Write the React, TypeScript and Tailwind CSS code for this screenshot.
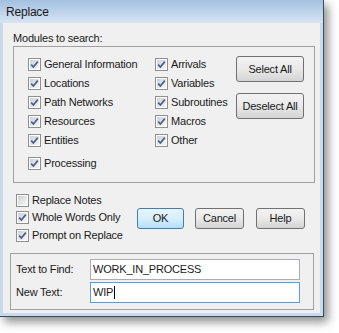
import type { ReactNode } from "react";

function Check({ checked = true }: { checked?: boolean }) {
  return (
    <span className="flex h-[13px] w-[13px] shrink-0 items-center justify-center border border-[#8e8f8f] bg-white">
      <span className="flex h-[11px] w-[11px] items-center justify-center border border-white bg-gradient-to-br from-[#cdd1d6] to-[#f7f7f7]">
        {checked && (
          <svg width="9" height="9" viewBox="0 0 9 9">
            <path d="M1.2 4.6 L3.4 7 L7.8 1.6" fill="none" stroke="#4a5f8a" strokeWidth="1.7" />
          </svg>
        )}
      </span>
    </span>
  );
}

function CheckRow({ label, checked = true, className = "" }: { label: string; checked?: boolean; className?: string }) {
  return (
    <div className={`flex shrink-0 items-center gap-[3px] ${className}`}>
      <Check checked={checked} />
      <span className="leading-[13px]">{label}</span>
    </div>
  );
}

function Button({ children, className = "", isDefault = false }: { children: ReactNode; className?: string; isDefault?: boolean }) {
  return (
    <div
      className={`flex shrink-0 items-center justify-center rounded-[3px] border ${
        isDefault
          ? "border-[#3c7fb1] bg-gradient-to-b from-[#e9f5fc] via-[#d7eefb] to-[#b5dff6]"
          : "border-[#707070] bg-gradient-to-b from-[#f3f3f3] via-[#e9e9e9] to-[#d4d4d4]"
      } ${className}`}
    >
      {children}
    </div>
  );
}

export default function App() {
  const left = ["General Information", "Locations", "Path Networks", "Resources", "Entities"];
  const right = ["Arrivals", "Variables", "Subroutines", "Macros", "Other"];

  return (
    <div className="h-[333px] w-[339px] overflow-hidden bg-white font-['Liberation_Sans',Arial,sans-serif] text-[11px] tracking-[-0.2px] text-[#1a1a1a]">
      <div className="flex h-[317px] w-[324px] flex-col border-r border-b border-[#34505f] bg-[#c9daec] shadow-[4px_5px_9px_rgba(0,0,0,0.45)]">
        {/* title bar */}
        <div className="flex h-[23px] shrink-0 items-center bg-gradient-to-b from-[#a3c0e0] to-[#d7e5f3] pl-[6px] text-[12px]">
          Replace
        </div>

        <div className="mx-[3px] mb-[3px] flex flex-1 flex-col overflow-hidden bg-[#f0f0f0] pl-[10px]">
          <div className="shrink-0 pt-[9px] leading-[13px]">Modules to search:</div>

          {/* modules group */}
          <div className="mt-[1px] flex h-[137px] w-[302px] shrink-0 border border-[#a0a0a0] pl-[14px] pt-[8px]">
            <div className="flex w-[127px] flex-col">
              {left.map((l) => (
                <CheckRow key={l} label={l} className="h-[19px]" />
              ))}
              <CheckRow label="Processing" className="mt-[4px] h-[19px]" />
            </div>
            <div className="flex w-[81px] flex-col">
              {right.map((l) => (
                <CheckRow key={l} label={l} className="h-[19px]" />
              ))}
            </div>
            <div className="flex flex-col gap-[11px] pt-[1px]">
              <Button className="h-[26px] w-[68px]">Select All</Button>
              <Button className="h-[26px] w-[68px]">Deselect All</Button>
            </div>
          </div>

          {/* options */}
          <div className="mt-[9px] flex shrink-0">
            <div className="ml-[3px] flex w-[121px] flex-col">
              <CheckRow label="Replace Notes" checked={false} className="h-[17px]" />
              <CheckRow label="Whole Words Only" className="h-[17px]" />
              <CheckRow label="Prompt on Replace" className="h-[18px]" />
            </div>
            <div className="flex gap-[11px] pt-[16px]">
              <Button isDefault className="h-[21px] w-[47px]">OK</Button>
              <Button className="h-[21px] w-[49px]">Cancel</Button>
              <Button className="ml-[1px] h-[21px] w-[49px]">Help</Button>
            </div>
          </div>

          {/* find / replace */}
          <div className="-ml-[3px] mt-[9px] flex h-[57px] w-[304px] shrink-0 flex-col gap-[2px] border border-[#a0a0a0] pl-[5px] pt-[5px]">
            <div className="flex items-center">
              <span className="w-[74px]">Text to Find:</span>
              <div className="flex h-[21px] w-[210px] items-center border border-[#abadb3] bg-white pl-[2px]">
                WORK_IN_PROCESS
              </div>
            </div>
            <div className="flex items-center">
              <span className="w-[74px]">New Text:</span>
              <div className="flex h-[21px] w-[210px] items-center border border-[#569de5] bg-white pl-[2px]">
                WIP<span className="ml-[1px] h-[13px] w-[1px] bg-black" />
              </div>
            </div>
          </div>
        </div>
      </div>
    </div>
  );
}
